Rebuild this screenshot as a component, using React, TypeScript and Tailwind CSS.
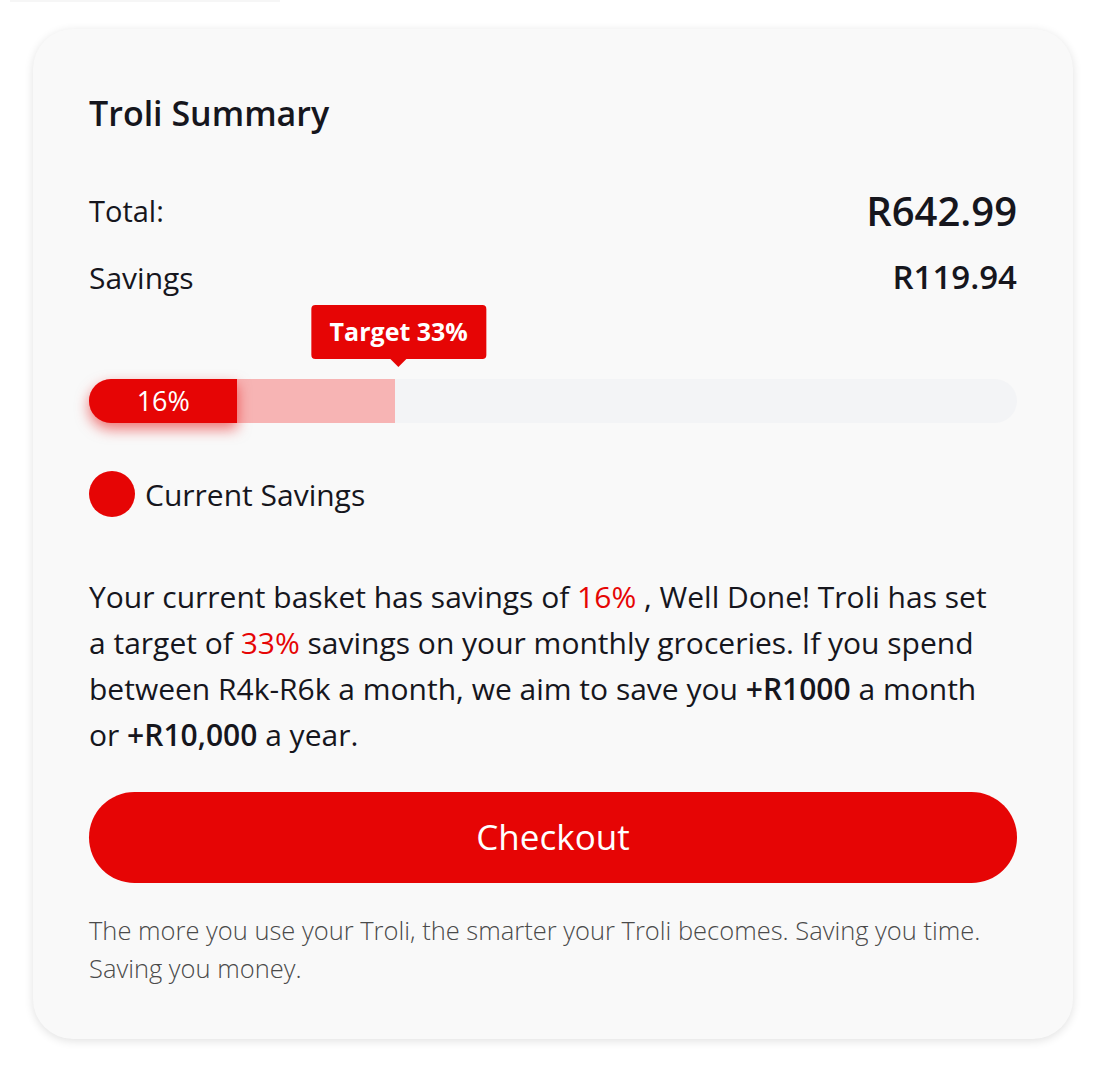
import React from "react";

export default function App() {
  const font = { fontFamily: '"Open Sans", "Noto Sans", sans-serif' };
  return (
    <div className="min-h-[1074px] w-full bg-white" style={font}>
      <div className="ml-[10px] w-[270px] h-[2px] bg-[#f6f6f6]" />
      <div className="pt-[27px] pl-[33px]">
        <div className="w-[1040px] h-[1010px] rounded-[40px] bg-[#f9f9f9] shadow-[0_2px_10px_rgba(0,0,0,0.12)] px-[56px] pt-[64px] text-[#16161d]">
          <h1 className="text-[34px] leading-[40px] font-semibold">Troli Summary</h1>

          <div className="mt-[54px] flex items-center justify-between h-[48px]">
            <span className="text-[29px]">Total:</span>
            <span className="text-[40px] font-semibold">R642.99</span>
          </div>
          <div className="mt-[20px] flex items-center justify-between h-[44px]">
            <span className="text-[30px]">Savings</span>
            <span className="text-[33px] font-semibold">R119.94</span>
          </div>

          <div className="relative mt-[6px] h-[74px]">
            <div className="absolute left-[33%] top-0 translate-x-[-48%] flex flex-col items-center">
              <div className="h-[54px] px-[18px] rounded-[4px] bg-[#e60505] text-white text-[25px] font-bold flex items-center">
                Target 33%
              </div>
              <div className="w-0 h-0 border-l-[8px] border-r-[8px] border-t-[8px] border-l-transparent border-r-transparent border-t-[#e60505]" />
            </div>
          </div>

          <div className="relative h-[44px] w-full rounded-full bg-[#f3f4f6]">
            <div className="absolute left-0 top-0 h-full w-[33%] rounded-l-full bg-[#f7b4b4]" />
            <div className="absolute left-0 top-0 h-full w-[16%] rounded-l-full bg-[#e60505] shadow-[0_6px_14px_rgba(230,5,5,0.55)] flex items-center justify-center text-white text-[27px]">
              16%
            </div>
          </div>

          <div className="mt-[48px] flex items-center gap-[10px]">
            <div className="w-[46px] h-[46px] rounded-full bg-[#e60505]" />
            <span className="text-[30px]">Current Savings</span>
          </div>

          <p className="mt-[57px] text-[30px] leading-[46px] whitespace-nowrap">
            Your current basket has savings of <span className="text-[#e60505]">16%</span> , Well Done! Troli has set
            <br />
            a target of <span className="text-[#e60505]">33%</span> savings on your monthly groceries. If you spend
            <br />
            between R4k-R6k a month, we aim to save you <span className="font-semibold">+R1000</span> a month
            <br />
            or <span className="font-semibold">+R10,000</span> a year.
          </p>

          <button className="mt-[34px] w-full h-[91px] rounded-full bg-[#e60505] text-white text-[35px]">
            Checkout
          </button>

          <p className="mt-[28px] text-[25.5px] leading-[38px] font-light text-[#4a4a4a] whitespace-nowrap">
            The more you use your Troli, the smarter your Troli becomes. Saving you time.
            <br />
            Saving you money.
          </p>
        </div>
      </div>
    </div>
  );
}
